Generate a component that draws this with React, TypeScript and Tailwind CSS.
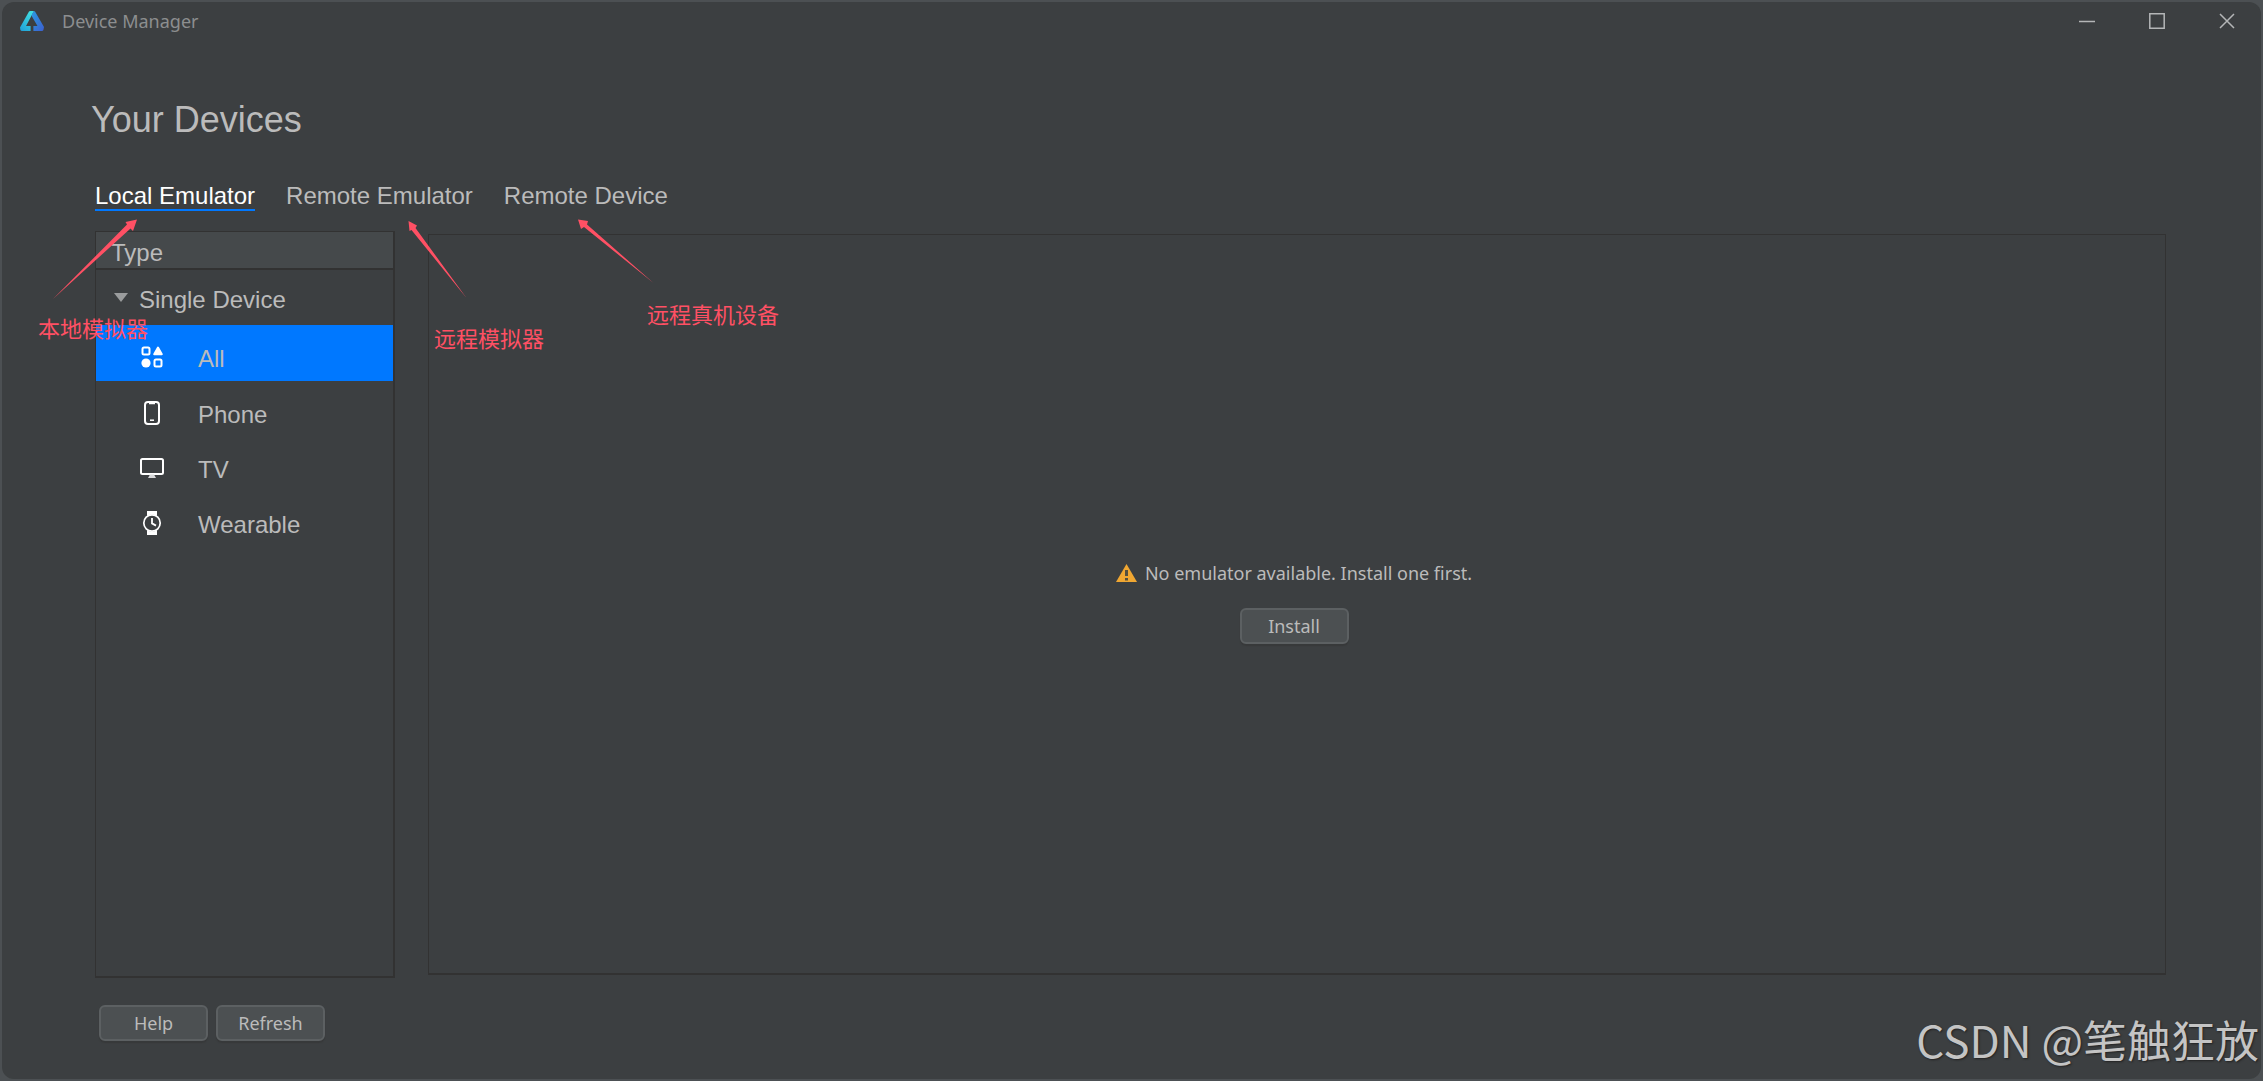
import type { ReactNode } from "react";

const arial = "font-['Liberation_Sans',Arial,sans-serif]";
const ui = "font-['Noto_Sans','Noto_Sans_CJK_SC',sans-serif]";

function Logo() {
  return (
    <svg width="24" height="20" viewBox="0 0 24 20" aria-hidden="true">
      <defs>
        <linearGradient id="lg-left" x1="0" y1="1" x2="0.6" y2="0">
          <stop offset="0" stopColor="#1f9fd8" />
          <stop offset="1" stopColor="#3fdbe0" />
        </linearGradient>
        <linearGradient id="lg-right" x1="0" y1="0" x2="1" y2="1">
          <stop offset="0" stopColor="#2b9be0" />
          <stop offset="1" stopColor="#3c5fd0" />
        </linearGradient>
      </defs>
      <path d="M9 0.6Q9.4 0 10.2 0H14L6 15H10.6V20H2Q0.9 20 0.4 19L0 16.4Z" fill="url(#lg-left)" />
      <path d="M11.4 4.5L13.8 0Q14.6 0 15 0.6L24 16L23.4 19Q23 20 22 20H13.4V15H17.5Z" fill="url(#lg-right)" />
    </svg>
  );
}

function AllIcon() {
  return (
    <svg width="24" height="24" viewBox="0 0 24 24" fill="none" stroke="#fff" strokeWidth="2" aria-hidden="true">
      <rect x="2.5" y="2.5" width="7" height="7" rx="1.5" />
      <rect x="14.5" y="14.5" width="7" height="7" rx="1.5" />
      <circle cx="6" cy="18" r="4.6" fill="#fff" stroke="none" />
      <path d="M18 2.6L21.8 9.2H14.2Z" fill="#fff" strokeLinejoin="round" />
    </svg>
  );
}

function PhoneIcon() {
  return (
    <svg width="24" height="24" viewBox="0 0 24 24" fill="none" stroke="#fff" strokeWidth="2" aria-hidden="true">
      <rect x="5" y="1" width="14" height="22" rx="3" />
      <path d="M9 2H15" strokeWidth="2.5" />
      <path d="M10 19.2H14" strokeWidth="1.5" />
    </svg>
  );
}

function TvIcon() {
  return (
    <svg width="24" height="24" viewBox="0 0 24 24" fill="none" stroke="#fff" strokeWidth="2" aria-hidden="true">
      <rect x="1" y="3" width="22" height="15" rx="1.5" />
      <path d="M10 18.5H14L16 22H8Z" fill="#d8d9da" stroke="none" />
    </svg>
  );
}

function WatchIcon() {
  return (
    <svg width="24" height="24" viewBox="0 0 24 24" fill="none" stroke="#fff" strokeWidth="1.7" aria-hidden="true">
      <path d="M7 0H17V5Q12 2 7 5ZM7 24H17V19Q12 22 7 19Z" fill="#fff" stroke="none" />
      <circle cx="12" cy="12" r="8.2" />
      <path d="M12 7V12.4L16 14.6" strokeWidth="1.8" />
    </svg>
  );
}

const devices: { label: string; icon: ReactNode; active?: boolean }[] = [
  { label: "All", icon: <AllIcon />, active: true },
  { label: "Phone", icon: <PhoneIcon /> },
  { label: "TV", icon: <TvIcon /> },
  { label: "Wearable", icon: <WatchIcon /> },
];

function Button({ children }: { children: ReactNode }) {
  return (
    <button
      type="button"
      className={`${ui} h-9 w-[109px] rounded-md border-2 border-[#5c6062] bg-[#4c5052] text-lg leading-8 text-[#bbbbbb] shadow-[0_2px_1px_#37393a]`}
    >
      {children}
    </button>
  );
}

function Annotation({ className, children }: { className: string; children: ReactNode }) {
  return (
    <span
      className={`absolute whitespace-nowrap font-['Noto_Sans_CJK_SC',sans-serif] text-[22px] leading-8 text-[#ff5064] ${className}`}
    >
      {children}
    </span>
  );
}

export default function App() {
  return (
    <div className="relative flex min-h-screen flex-col bg-[#4c5053] p-0.5">
      <div className="flex grow flex-col rounded-xl bg-[#3c3f41]">
        <header className="flex h-[38px] items-center justify-between pr-[26px] pl-[18px]">
          <div className="flex items-center gap-[18px]">
            <Logo />
            <span className={`${ui} text-lg leading-6 text-[#8c8e8f]`}>Device Manager</span>
          </div>
          <div className="flex items-center gap-[54px] text-[#b4b6b7]">
            <button type="button" aria-label="Minimize">
              <svg width="16" height="16" viewBox="0 0 16 16" stroke="currentColor" strokeWidth="1.5">
                <path d="M0 8.5H16" />
              </svg>
            </button>
            <button type="button" aria-label="Maximize">
              <svg width="16" height="16" viewBox="0 0 16 16" fill="none" stroke="currentColor" strokeWidth="1.5">
                <path d="M0.8 0.8H15.2V15.2H0.8Z" />
              </svg>
            </button>
            <button type="button" aria-label="Close">
              <svg width="16" height="16" viewBox="0 0 16 16" fill="none" stroke="currentColor" strokeWidth="1.5">
                <path d="M1 1L15 15M15 1L1 15" />
              </svg>
            </button>
          </div>
        </header>

        <main className={`${arial} flex grow flex-col pt-[58px] pr-[95px] pl-[93px] text-[#bbbbbb]`}>
          <h1 className="-ml-1 text-[36px] leading-[44px]">Your Devices</h1>

          <nav className="mt-[41px] flex gap-[31px] text-2xl leading-[26px]">
            <a href="#local" className="border-b-2 border-[#0078ff] text-white">
              Local Emulator
            </a>
            <a href="#remote">Remote Emulator</a>
            <a href="#device">Remote Device</a>
          </nav>

          <div className="mt-5 flex grow gap-[33px]">
            <aside className="w-[300px] border border-r-2 border-b-2 border-[#323232] text-2xl">
              <div className="h-[38px] border-b-2 border-[#323232] bg-[#45494b] pt-[7px] pl-[15px] leading-7">Type</div>
              <button type="button" className="flex h-[55px] w-full items-center pt-1 pl-[18px]">
                <svg width="14" height="10" viewBox="0 0 14 10" className="mb-1" aria-hidden="true">
                  <path d="M0 0H14L7 9Z" fill="#9a9c9d" />
                </svg>
                <span className="ml-[11px]">Single Device</span>
              </button>
              <ul>
                {devices.map((d) => (
                  <li key={d.label}>
                    <button
                      type="button"
                      className={`flex w-full items-center pt-2 pl-11 text-left ${d.active ? "h-14 bg-[#0078ff]" : "h-[55px]"}`}
                    >
                      {d.icon}
                      <span className="ml-[34px] pt-1">{d.label}</span>
                    </button>
                  </li>
                ))}
              </ul>
            </aside>

            <section className="mt-[3px] mb-[3px] flex grow flex-col items-center justify-center border border-b-2 border-[#323232] pr-[6px] pb-1">
              <p className={`${ui} flex items-center gap-2 text-lg leading-6`}>
                <svg width="21" height="18" viewBox="0 0 21 18" aria-hidden="true">
                  <path d="M10.5 0L21 18H0Z" fill="#f0a732" />
                  <path d="M9 6H12V12H9ZM9 14H12V16.5H9Z" fill="#55503f" />
                </svg>
                No emulator available. Install one first.
              </p>
              <div className="mt-[23px]">
                <Button>Install</Button>
              </div>
            </section>
          </div>

          <footer className="mt-[27px] mb-[38px] flex gap-2 pl-1">
            <Button>Help</Button>
            <Button>Refresh</Button>
          </footer>
        </main>
      </div>

      <svg
        width="700"
        height="320"
        viewBox="0 0 700 320"
        className="pointer-events-none absolute top-0 left-0"
        fill="#ff5064"
        aria-hidden="true"
      >
        <path d="M137 219.5L133 231L130.5 228.5L53 299L127 224.5L125.5 222Z" />
        <path d="M408.5 221L417 225.5L415.5 228L466.5 298L411.5 230L409.5 231Z" />
        <path d="M578 219.5L588 221L587 224.5L653.5 283L584 227L581 229Z" />
      </svg>
      <Annotation className="top-[311px] left-[38px]">本地模拟器</Annotation>
      <Annotation className="top-[321px] left-[434px]">远程模拟器</Annotation>
      <Annotation className="top-[297px] left-[647px]">远程真机设备</Annotation>

      <span className="absolute right-1 bottom-3 font-['Noto_Sans_CJK_SC',sans-serif] text-[44px] leading-[60px] whitespace-nowrap text-[#c4c4c4] [text-shadow:1px_1px_2px_#222]">
        CSDN @笔触狂放
      </span>
    </div>
  );
}
